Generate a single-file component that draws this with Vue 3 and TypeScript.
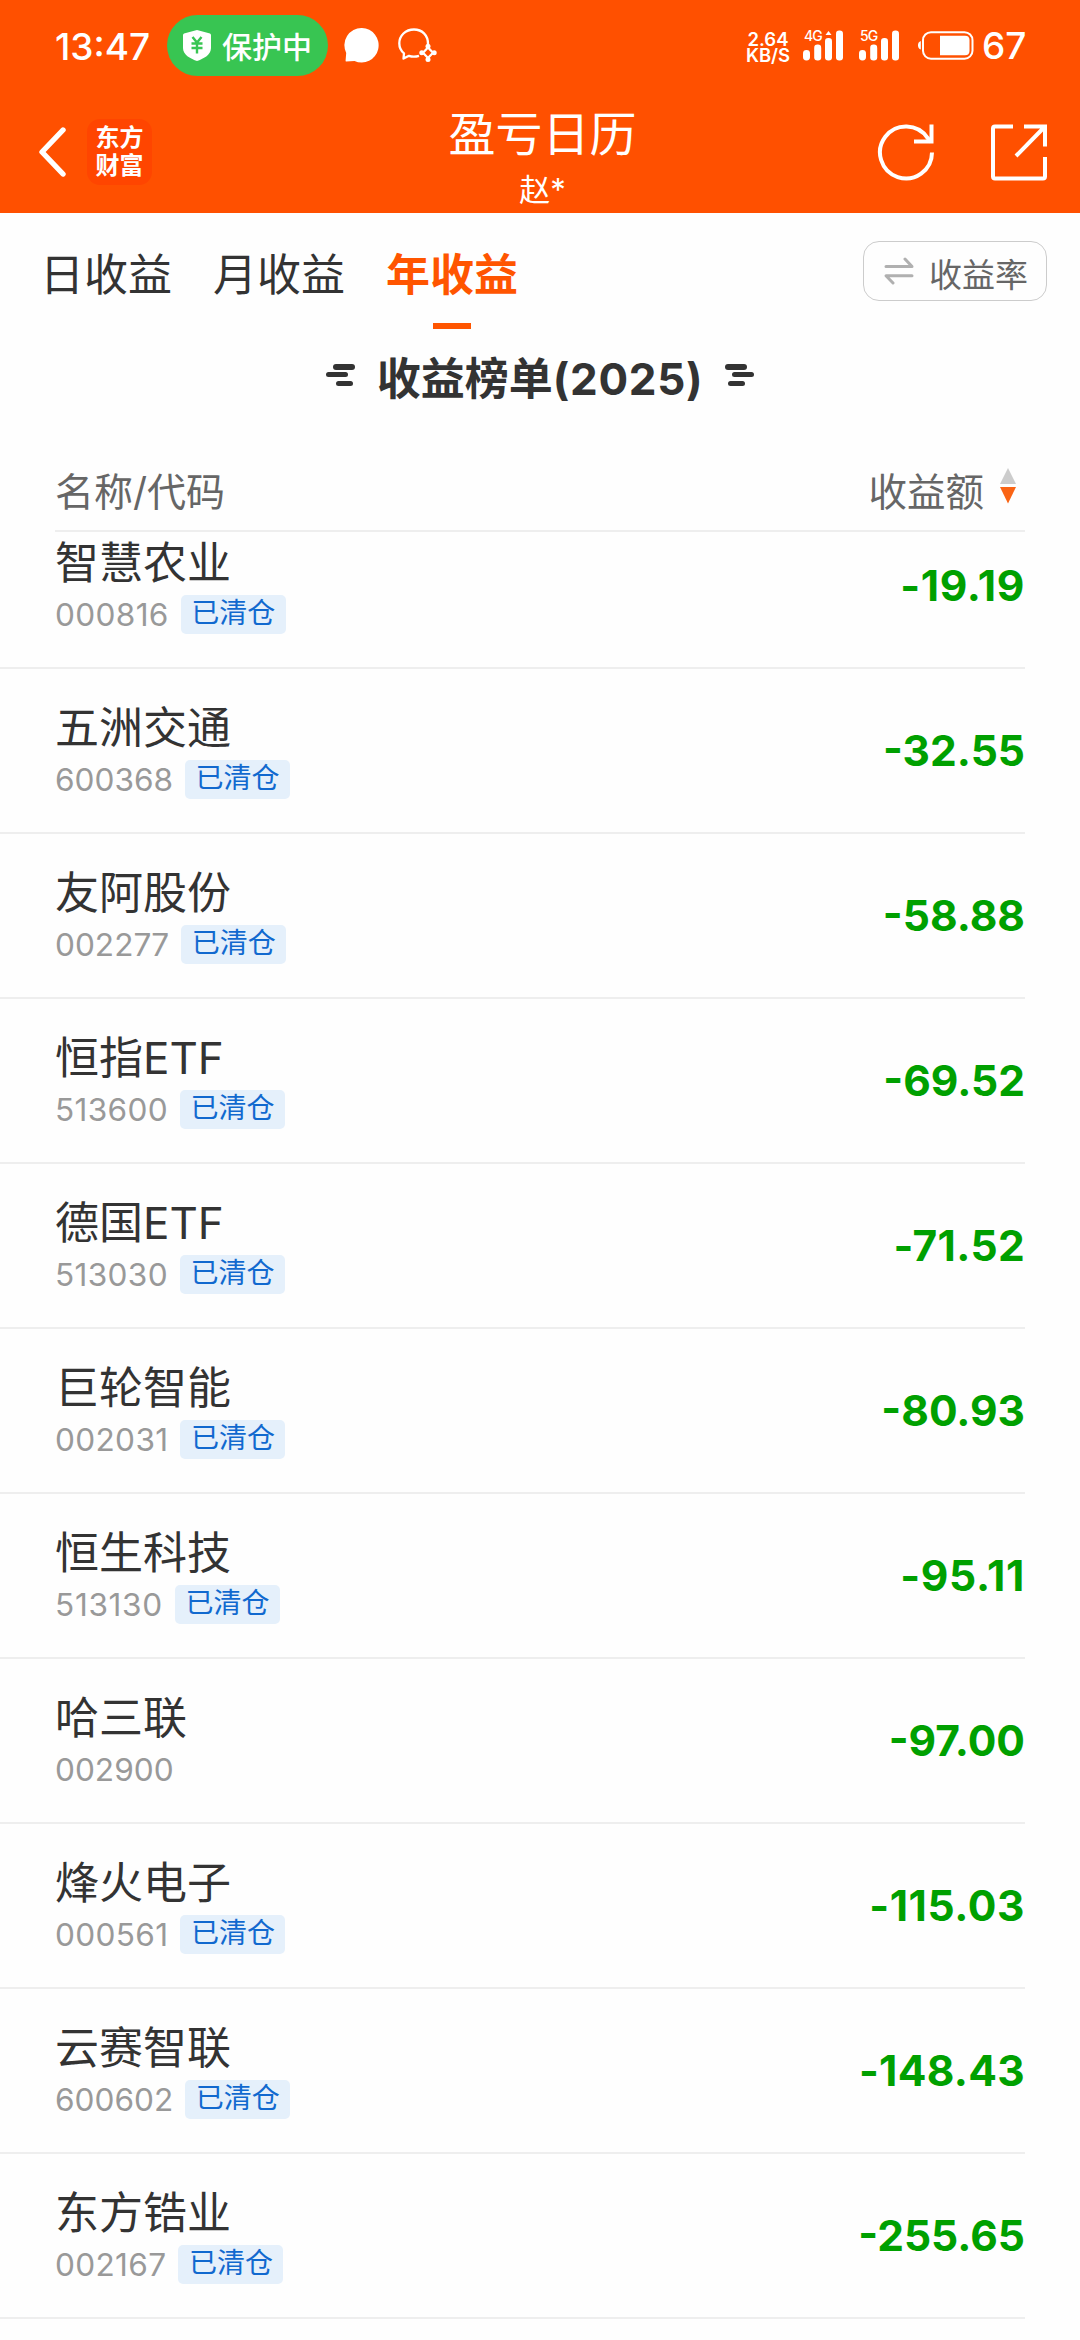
<script setup lang="ts">
interface Holding {
  name: string
  code: string
  amount: string
  closed: boolean
}

const tabs = ['日收益', '月收益', '年收益']
const activeTab = '年收益'

const holdings: Holding[] = [
  { name: '智慧农业', code: '000816', amount: '-19.19', closed: true },
  { name: '五洲交通', code: '600368', amount: '-32.55', closed: true },
  { name: '友阿股份', code: '002277', amount: '-58.88', closed: true },
  { name: '恒指ETF', code: '513600', amount: '-69.52', closed: true },
  { name: '德国ETF', code: '513030', amount: '-71.52', closed: true },
  { name: '巨轮智能', code: '002031', amount: '-80.93', closed: true },
  { name: '恒生科技', code: '513130', amount: '-95.11', closed: true },
  { name: '哈三联', code: '002900', amount: '-97.00', closed: false },
  { name: '烽火电子', code: '000561', amount: '-115.03', closed: true },
  { name: '云赛智联', code: '600602', amount: '-148.43', closed: true },
  { name: '东方锆业', code: '002167', amount: '-255.65', closed: true },
]

// The digit 1 is narrow, so figures that contain it get a little extra tracking.
function tracking(figure: string): string {
  const ones = figure.split('1').length - 1
  return `${((ones * 2) / figure.length).toFixed(2)}px`
}
</script>

<template>
  <div class="screen">
    <header class="top">
      <div class="status">
        <span class="time">13:47</span>
        <span class="pill">
          <svg width="28" height="31" viewBox="0 0 28 31">
            <path d="M14 0 L27 3.5 Q28 4 28 5 V18 C28 25 20 29 14 31 C8 29 0 25 0 18 V5 Q0 4 1 3.5 Z" fill="#fff" />
            <path d="M9.5 7 L14 12.5 L18.5 7 M8.5 13.5 H19.5 M8.5 18 H19.5 M14 12.5 V23.5" fill="none" stroke="#38c552" stroke-width="2.4" />
          </svg>
          <span class="pill-text">保护中</span>
        </span>
        <svg class="bubble" width="35" height="35" viewBox="0 0 35 35">
          <path d="M18 0 A17 17.3 0 1 1 10.5 33 L2 33.5 Q1.5 33.5 1.6 32.5 L2.2 25 A17.3 17.3 0 0 1 18 0 Z" fill="#fff" />
        </svg>
        <svg class="bubble-ai" width="39" height="35" viewBox="0 0 39 35" fill="none" stroke="#fff" stroke-width="2.3" stroke-linejoin="round">
          <path d="M30 16 C30 7 24 1.5 16 1.5 C7.5 1.5 1.3 7.5 1.3 15.3 C1.3 19.5 3 23 6 25.3 L5.5 30.5 L11 27.8 C14.5 29 18 28.7 21 27.8" />
          <path d="M30 19.5 L35 24.8 L30 30 L25 24.8 Z" />
          <g fill="#fff" stroke="none">
            <circle cx="30" cy="18.2" r="2.5" /><circle cx="36.2" cy="24.8" r="2.5" />
            <circle cx="30" cy="31.5" r="2.5" /><circle cx="23.8" cy="24.8" r="2.5" />
          </g>
        </svg>
        <span class="speed"><span>2.64</span><span>KB/S</span></span>
        <span class="signal">
          <span class="net">4G</span>
          <svg width="41" height="31" viewBox="0 0 41 31" fill="#fff">
            <rect x="0" y="20" width="7" height="10.5" rx="3.4" /><rect x="11.2" y="14.5" width="7" height="16" rx="3.2" />
            <rect x="22" y="8" width="7" height="22.5" rx="3.2" /><rect x="33" y="0.5" width="7" height="30" rx="3.2" />
            <path d="M22.5 5 L25.5 1 L28.5 5 Z" />
          </svg>
        </span>
        <span class="signal second">
          <span class="net">5G</span>
          <svg width="41" height="31" viewBox="0 0 41 31" fill="#fff">
            <rect x="0" y="20" width="7" height="10.5" rx="3.4" /><rect x="11.2" y="14.5" width="7" height="16" rx="3.2" />
            <rect x="22" y="8" width="7" height="22.5" rx="3.2" /><rect x="33" y="0.5" width="7" height="30" rx="3.2" />
          </svg>
        </span>
        <svg class="battery" width="56" height="29" viewBox="0 0 56 29">
          <path d="M2.8 10 V18.5 Q0 17.5 0 14.2 Q0 11 2.8 10 Z" fill="#fff" />
          <rect x="5" y="1.2" width="49.5" height="26.5" rx="8" fill="none" stroke="#fff" stroke-width="2" />
          <path d="M22 4.7 H47 Q51.5 4.7 51.5 9 V20 Q51.5 24.2 47 24.2 H22 Z" fill="#fff" />
        </svg>
        <span class="level">67</span>
      </div>

      <nav class="nav">
        <div class="nav-left">
          <svg width="28" height="50" viewBox="0 0 28 50">
            <path d="M25 3 L4 25 L25 47" fill="none" stroke="#fff" stroke-width="5.4" stroke-linecap="round" stroke-linejoin="round" />
          </svg>
          <span class="logo"><span>东方</span><span>财富</span></span>
        </div>
        <div class="nav-title">
          <h1>盈亏日历</h1>
          <p>赵*</p>
        </div>
        <div class="nav-right">
          <svg width="58" height="58" viewBox="0 0 58 58" fill="none" stroke="#fff" stroke-width="4">
            <path d="M55 29.5 A26 26 0 1 1 50.5 14.8 L54 19" />
            <path d="M54.5 1.5 V18.5 H37" />
          </svg>
          <svg width="56" height="57" viewBox="0 0 56 57" fill="none" stroke="#fff" stroke-width="4">
            <path d="M22 2.5 H4 Q2 2.5 2 4.5 V52.5 Q2 54.5 4 54.5 H52 Q54 54.5 54 52.5 V33" />
            <path d="M33 2.5 H54 V22.5 M53 3.5 L25 32" />
          </svg>
        </div>
      </nav>
    </header>

    <div class="tabs">
      <span v-for="tab in tabs" :key="tab" class="tab" :class="{ active: tab === activeTab }">{{ tab }}</span>
      <button class="switch" type="button">
        <svg width="30" height="28" viewBox="0 0 30 28" fill="none" stroke="#b0b0b0" stroke-width="3" stroke-linecap="round" stroke-linejoin="round">
          <path d="M2 9.5 H28 L21 2" />
          <path d="M28 18.8 H2 L9 26" />
        </svg>
        <span>收益率</span>
      </button>
    </div>

    <h2 class="board">
      <svg width="29" height="22" viewBox="0 0 29 22" fill="#333">
        <rect x="7" y="0" width="22" height="6" rx="3" /><rect x="0" y="8" width="22" height="5" rx="2.5" /><rect x="10" y="17" width="17" height="5" rx="2.5" />
      </svg>
      <span>收益榜单<span class="year">(2025)</span></span>
      <svg width="29" height="22" viewBox="0 0 29 22" fill="#333">
        <rect x="0" y="0" width="22" height="6" rx="3" /><rect x="7" y="8" width="22" height="5" rx="2.5" /><rect x="3" y="17" width="17" height="5" rx="2.5" />
      </svg>
    </h2>

    <div class="columns">
      <span>名称/代码</span>
      <span class="sort">
        收益额
        <svg width="16" height="36" viewBox="0 0 16 36">
          <path d="M8 0 L16 16 H0 Z" fill="#ccc" /><path d="M8 35.5 L16 19 H0 Z" fill="#fa6414" />
        </svg>
      </span>
    </div>

    <main class="viewport">
      <ul class="list">
        <li v-for="item in holdings" :key="item.code" class="row">
          <div class="stock">
            <span class="name">{{ item.name }}</span>
            <span class="meta">
              <span class="code" :style="{ letterSpacing: tracking(item.code) }">{{ item.code }}</span>
              <span v-if="item.closed" class="badge">已清仓</span>
            </span>
          </div>
          <strong class="amount" :style="{ letterSpacing: tracking(item.amount) }">{{ item.amount }}</strong>
        </li>
      </ul>
    </main>
  </div>
</template>

<style>
body {
  margin: 0;
  background: #fefefe;
}
</style>

<style scoped>
.screen {
  width: 1080px;
  height: 2340px;
  overflow: hidden;
  background: #fefefe;
  color: #333;
  font-family: Inter, "Noto Sans CJK SC", sans-serif;
}
.screen svg {
  flex: none;
  display: block;
}
.top {
  height: 213px;
  background: #ff5000;
  color: #fff;
}
.status {
  display: flex;
  align-items: center;
  height: 91px;
  padding-left: 55px;
  white-space: nowrap;
}
.time {
  box-sizing: border-box;
  width: 112px;
  padding-top: 3px;
  font-size: 37px;
  font-weight: 550;
  line-height: 60px;
}
.pill {
  display: flex;
  align-items: center;
  gap: 11px;
  box-sizing: border-box;
  width: 161px;
  height: 61px;
  padding-left: 16px;
  border-radius: 31px;
  background: #38c552;
  font-size: 30px;
  font-weight: 500;
}
.pill-text {
  padding-bottom: 2px;
}
.bubble {
  margin-left: 16px;
}
.bubble-ai {
  margin-left: 19px;
}
.speed {
  display: flex;
  flex-direction: column;
  align-items: center;
  width: 44px;
  margin-left: 309px;
  padding-top: 2px;
  font-size: 18.5px;
  font-weight: 600;
  line-height: 16px;
}
.signal {
  position: relative;
  margin-left: 13px;
}
.signal.second {
  margin-left: 15px;
}
.net {
  position: absolute;
  top: 0;
  left: 1px;
  font-size: 14px;
  font-weight: 500;
  line-height: 12px;
  letter-spacing: -1px;
}
.battery {
  margin-left: 18px;
}
.level {
  margin-left: 8px;
  font-size: 37px;
  font-weight: 550;
}
.nav {
  display: grid;
  grid-template-columns: 1fr auto 1fr;
  height: 122px;
  padding: 0 33px 0 38px;
}
.nav-left {
  display: flex;
  align-items: center;
  gap: 21px;
  height: 122px;
}
.logo {
  display: flex;
  flex-direction: column;
  justify-content: center;
  align-items: center;
  box-sizing: border-box;
  width: 65px;
  height: 66px;
  border-radius: 13px;
  background: #ff4500;
  font-size: 24px;
  font-weight: 700;
  line-height: 28px;
}
.nav-title {
  text-align: center;
}
.nav-title h1 {
  margin: 9px 0 0;
  font-size: 47px;
  font-weight: 400;
  line-height: 68px;
}
.nav-title p {
  margin: 0;
  font-size: 31px;
  line-height: 44px;
}
.nav-right {
  display: flex;
  justify-content: flex-end;
  align-items: center;
  gap: 56px;
  height: 122px;
}
.tabs {
  display: flex;
  align-items: flex-start;
  height: 116px;
  padding: 0 33px 0 40px;
}
.tab {
  display: flex;
  flex-direction: column;
  align-items: center;
  width: 132px;
  margin: 29px 41px 0 0;
  font-size: 44px;
  line-height: 66px;
  white-space: nowrap;
}
.tab.active {
  color: #ff5500;
  font-weight: 700;
}
.tab.active::after {
  content: "";
  width: 38px;
  height: 6px;
  margin-top: 15px;
  background: #ff5500;
}
.switch {
  display: flex;
  align-items: center;
  gap: 15px;
  box-sizing: border-box;
  width: 184px;
  height: 60px;
  margin: 28px 0 0 auto;
  padding: 0 0 0 20px;
  border: 1px solid #ccc;
  border-radius: 16px;
  background: none;
  color: #666;
  font: 400 33px Inter, "Noto Sans CJK SC", sans-serif;
}
.switch span {
  padding-top: 3px;
}
.board {
  display: flex;
  justify-content: center;
  align-items: flex-start;
  gap: 22px;
  box-sizing: border-box;
  height: 117px;
  margin: 0;
  padding-top: 17px;
  font-size: 44px;
  font-weight: 700;
  line-height: 66px;
}
.board svg {
  margin-top: 18px;
}
.year {
  letter-spacing: 0.7px;
}
.columns {
  display: flex;
  justify-content: space-between;
  align-items: center;
  box-sizing: border-box;
  height: 86px;
  margin: 0 55px;
  padding-top: 1px;
  border-bottom: 2px solid #eee;
  color: #666;
  font-size: 39px;
}
.sort {
  display: flex;
  align-items: center;
  gap: 16px;
  padding-right: 9px;
  font-size: 38.5px;
}
.sort svg {
  margin-top: -5px;
}
.viewport {
  overflow: hidden;
}
.list {
  margin: -28px 0 0;
  padding: 0;
  list-style: none;
}
.row {
  display: flex;
  justify-content: space-between;
  box-sizing: border-box;
  height: 165px;
  margin-right: 55px;
  padding-left: 55px;
  border-bottom: 2px solid #eee;
}
.stock {
  display: flex;
  flex-direction: column;
  padding-top: 27px;
}
.name {
  font-size: 44px;
  line-height: 64px;
}
.meta {
  display: flex;
  align-items: flex-start;
  gap: 12px;
}
.code {
  color: #999;
  font-size: 31.6px;
  font-kerning: none;
  line-height: 40px;
}
.badge {
  width: 105px;
  height: 39px;
  border-radius: 5px;
  background: #e5f0fb;
  color: #1169cf;
  font-size: 28px;
  line-height: 36px;
  text-align: center;
}
.amount {
  align-self: center;
  color: #00a000;
  font-size: 42.5px;
  font-weight: 700;
  line-height: 60px;
}
</style>
